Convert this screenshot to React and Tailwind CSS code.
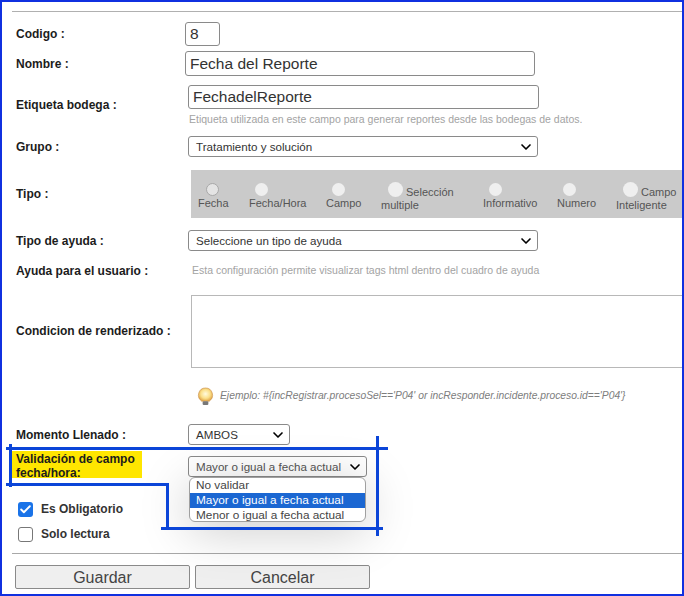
import { ChevronDown, Check } from "lucide-react";

const labelClass = "w-[183px] shrink-0 whitespace-nowrap pl-[14px] text-[12px] font-bold text-[#1c1c1c]";
const inputClass = "rounded-[3px] border border-[#8a8a8a] bg-white px-[4px] text-[15.5px] text-[#333] outline-none";

const tipos = [
  { id: "fecha", label: "Fecha", width: "w-[51px]", offset: "ml-[8px]", ring: true },
  { id: "fechahora", label: "Fecha/Hora", width: "w-[77px]", offset: "ml-[6px]" },
  { id: "campo", label: "Campo", width: "w-[55px]", offset: "ml-[6px]" },
  { id: "seleccion", first: "Selección", second: "multiple", width: "w-[102px]", offset: "ml-[7px]" },
  { id: "informativo", label: "Informativo", width: "w-[74px]", offset: "ml-[6px]" },
  { id: "numero", label: "Numero", width: "w-[59px]", offset: "ml-[6px]" },
  { id: "inteligente", first: "Campo", second: "Inteligente", width: "w-[70px]", offset: "ml-[6px]" },
];

function Select({ value, className }) {
  return (
    <div className={`flex items-center justify-between whitespace-nowrap rounded-[3px] border border-[#8a8a8a] bg-white pl-[7px] pr-[3px] text-[11.6px] text-[#333] ${className}`}>
      <span>{value}</span>
      <ChevronDown className="h-[16px] w-[16px] shrink-0 text-black" strokeWidth={2.5} />
    </div>
  );
}

function Radio({ id, label, first, second, width, offset, ring }) {
  if (first) {
    return (
      <div className={`${width} pt-[10px] text-[11px] leading-[13px] text-[#555]`}>
        <div className="flex items-center">
          <span className="ml-[7px] h-[15px] w-[15px] rounded-full bg-[#efefef]" />
          <span className="ml-[3px] mt-[6px]">{first}</span>
        </div>
        <div>{second}</div>
      </div>
    );
  }
  return (
    <div className={`${width} pt-[13px] text-[11px] leading-[13px] text-[#555]`} id={id}>
      <div className={`${offset} h-[13px] w-[13px] rounded-full bg-[#e4e4e4] ${ring ? "border border-[#a8a8a8]" : "bg-[#efefef]"}`} />
      <div className="mt-[1px]">{label}</div>
    </div>
  );
}

export default function App() {
  return (
    <div className="relative h-[596px] w-[684px] overflow-hidden border-2 border-[#1030e0] bg-white font-['Liberation_Sans',Arial,sans-serif]">
      <div className="ml-[10px] mt-[9px] h-px bg-[#b0b0b0]" />

      <div className="mt-[10px] flex h-[24px] items-center">
        <div className={labelClass}>Codigo :</div>
        <input defaultValue="8" className={`${inputClass} h-[24px] w-[35px]`} />
      </div>

      <div className="mt-[5px] flex h-[25px] items-center">
        <div className={labelClass}>Nombre :</div>
        <input defaultValue="Fecha del Reporte" className={`${inputClass} h-[25px] w-[350px]`} />
      </div>

      <div className="mt-[9px] flex h-[24px] items-center">
        <div className={`${labelClass} mt-[16px]`}>Etiqueta bodega :</div>
        <input defaultValue="FechadelReporte" className={`${inputClass} ml-[3px] h-[24px] w-[351px]`} />
      </div>
      <p className="ml-[187px] mt-[4px] text-[10.5px] leading-[13px] text-[#a3a3a3]">
        Etiqueta utilizada en este campo para generar reportes desde las bodegas de datos.
      </p>

      <div className="mt-[10px] flex h-[21px] items-center">
        <div className={labelClass}>Grupo :</div>
        <Select value="Tratamiento y solución" className="ml-[3px] h-[21px] w-[350px]" />
      </div>

      <div className="mt-[13px] flex h-[48px] items-center">
        <div className={labelClass}>Tipo :</div>
        <div className="ml-[6px] flex h-[48px] flex-1 bg-[#cacaca] pl-[7px]">
          {tipos.map((t) => (
            <Radio key={t.id} {...t} />
          ))}
        </div>
      </div>

      <div className="mt-[12px] flex h-[21px] items-center">
        <div className={labelClass}>Tipo de ayuda :</div>
        <Select value="Seleccione un tipo de ayuda" className="ml-[3px] h-[21px] w-[350px]" />
      </div>

      <div className="mt-[13px] flex h-[14px] items-center">
        <div className={labelClass}>Ayuda para el usuario :</div>
        <p className="ml-[7px] whitespace-nowrap text-[10.5px] text-[#a3a3a3]">
          Esta configuración permite visualizar tags html dentro del cuadro de ayuda
        </p>
      </div>

      <div className="mt-[17px] flex h-[73px] items-center">
        <div className={`${labelClass} mb-[2px]`}>Condicion de renderizado :</div>
        <div className="ml-[6px] h-[73px] flex-1 border border-r-0 border-[#b8b8b8] bg-white" />
      </div>

      <div className="ml-[194px] mt-[18px] flex h-[20px] items-center gap-[5px]">
        <svg viewBox="0 0 20 20" className="h-[19px] w-[19px] shrink-0">
          <defs>
            <radialGradient id="bulb" cx="0.5" cy="0.45" r="0.6">
              <stop offset="0" stopColor="#fffbe0" />
              <stop offset="0.55" stopColor="#fbe08a" />
              <stop offset="1" stopColor="#dc9a3c" />
            </radialGradient>
          </defs>
          <path d="M10 1a7.5 7.5 0 0 0-4 13.8V15h8v-.2A7.5 7.5 0 0 0 10 1z" fill="url(#bulb)" stroke="#c89048" strokeWidth="0.6" />
          <rect x="7" y="15" width="6" height="4" rx="1.2" fill="#777" />
        </svg>
        <span className="whitespace-nowrap text-[10.3px] italic text-[#7d7d7d]">
          Ejemplo: #{"{"}incRegistrar.procesoSel=='P04' or incResponder.incidente.proceso.id=='P04'{"}"}
        </span>
      </div>

      <div className="mt-[18px] flex h-[21px] items-center">
        <div className={labelClass}>Momento Llenado :</div>
        <Select value="AMBOS" className="ml-[3px] h-[21px] w-[102px]" />
      </div>

      <div className="mt-[6px] flex h-[27px] items-center">
        <div className="ml-[10px] flex h-[27px] w-[130px] shrink-0 items-center bg-[#ffe600] pl-[4px] pt-[2px] text-[12px] font-bold leading-[14px] text-[#1c1c1c]">
          Validación de campo<br />fecha/hora:
        </div>
        <Select value="Mayor o igual a fecha actual" className="ml-[46px] mt-[4px] h-[21px] w-[179px] text-[#555]" />
      </div>

      <div className="ml-[16px] mt-[23px] flex h-[16px] items-center gap-[8px]">
        <span className="flex h-[15px] w-[15px] items-center justify-center rounded-[3px] bg-[#1a73e8]">
          <Check className="h-[13px] w-[13px] text-white" strokeWidth={3.5} />
        </span>
        <span className="text-[12px] font-bold text-[#333]">Es Obligatorio</span>
      </div>
      <div className="ml-[16px] mt-[9px] flex h-[16px] items-center gap-[8px]">
        <span className="h-[15px] w-[15px] rounded-[3px] border border-[#777] bg-white" />
        <span className="text-[12px] font-bold text-[#333]">Solo lectura</span>
      </div>

      <div className="ml-[10px] mt-[11px] h-px bg-[#a8a8a8]" />

      <div className="ml-[13px] mt-[11px] flex gap-[5px]">
        <button className="h-[24px] w-[175px] rounded-[2px] border border-[#8a8a8a] bg-[#efefef] text-[16px] text-[#444]">Guardar</button>
        <button className="h-[24px] w-[175px] rounded-[2px] border border-[#8a8a8a] bg-[#efefef] text-[16px] text-[#444]">Cancelar</button>
      </div>

      {/* opened dropdown */}
      <ul className="absolute left-[187px] top-[475px] h-[45px] w-[177px] overflow-hidden rounded-[6px] border border-[#a0a0a0] bg-white text-[11.8px] leading-[15px] text-[#444] shadow-[0_8px_50px_rgba(0,0,0,0.22)]">
        <li className="pl-[6px]">No validar</li>
        <li className="bg-[#1b67d2] pl-[6px] text-white">Mayor o igual a fecha actual</li>
        <li className="pl-[6px]">Menor o igual a fecha actual</li>
      </ul>

      {/* annotation lines */}
      <div className="absolute left-[4px] top-[445px] h-[3px] w-[382px] bg-[#0b45d8]" />
      <div className="absolute left-[7px] top-[442px] h-[43px] w-[3px] bg-[#0b45d8]" />
      <div className="absolute left-[4px] top-[481px] h-[3px] w-[163px] bg-[#0b45d8]" />
      <div className="absolute left-[164px] top-[481px] h-[46px] w-[3px] bg-[#0b45d8]" />
      <div className="absolute left-[159px] top-[525px] h-[3px] w-[222px] bg-[#0b45d8]" />
      <div className="absolute left-[374px] top-[434px] h-[100px] w-[3px] bg-[#0b45d8]" />
    </div>
  );
}
